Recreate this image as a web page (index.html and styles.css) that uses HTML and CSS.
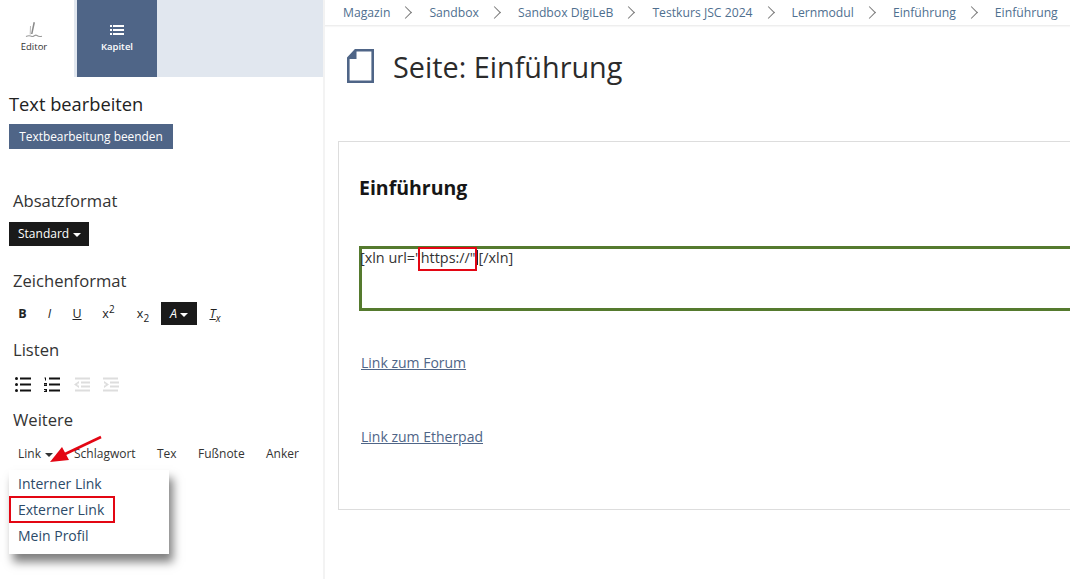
FILE: index.html
```html
<!DOCTYPE html>
<html lang="de">
<head>
<meta charset="utf-8">
<title>Seite: Einführung</title>
<link rel="stylesheet" href="styles.css">
</head>
<body>
<div class="app">
  <aside class="side">
    <div class="tabs">
      <div class="tab tab-on">
        <svg class="tab-ico" width="20" height="18" viewBox="0 0 20 18"><path d="M9.500 1 L11 1.500 L8.500 13 L7 13 Z" fill="#8a8a8a"/><path d="M6.500 5 L6.200 13.500" stroke="#bbb" stroke-width="1" fill="none"/><path d="M2 15.500 C4 14.500 6 14.500 8 15.500 C10 16 11 13 13 14.500 C14 15.300 15.500 15.800 18 15.200" stroke="#999" stroke-width="1.100" fill="none"/></svg>
        <span>Editor</span>
      </div>
      <div class="tab tab-dark">
        <svg class="tab-ico" width="20" height="18" viewBox="0 0 20 18"><path d="M3 4h2v2H3zM6 4h11v2H6zM3 8h2v2H3zM6 8h11v2H6zM3 12h2v2H3zM6 12h11v2H6z" fill="#fff"/></svg>
        <span>Kapitel</span>
      </div>
    </div>
    <div class="side-body">
      <h2 class="side-title">Text bearbeiten</h2>
      <button class="btn-end">Textbearbeitung beenden</button>
      <h3 class="group g-abs">Absatzformat</h3>
      <div class="drop-dark">Standard <i class="caret"></i></div>
      <h3 class="group g-zei">Zeichenformat</h3>
      <div class="tools">
        <span class="t t-b">B</span>
        <span class="t t-i">I</span>
        <span class="t t-u">U</span>
        <span class="t t-sup">x<sup>2</sup></span>
        <span class="t t-sub">x<sub>2</sub></span>
        <span class="t t-a"><em>A</em><i class="caret"></i></span>
        <span class="t t-x"><u>T</u><sub>x</sub></span>
      </div>
      <h3 class="group g-lis">Listen</h3>
      <div class="lists">
        <svg width="16" height="15" viewBox="0 0 16 15"><g fill="#111"><circle cx="1.500" cy="1.500" r="1.500"/><circle cx="1.500" cy="7.500" r="1.500"/><circle cx="1.500" cy="13.500" r="1.500"/><rect x="5" y="0.500" width="11" height="2"/><rect x="5" y="6.500" width="11" height="2"/><rect x="5" y="12.500" width="11" height="2"/></g></svg>
        <svg width="16" height="15" viewBox="0 0 16 15"><g fill="#111"><path d="M0.500 0.500 H2 V3.500 H1 V1.500 H0.500 Z"/><path d="M0 6 H3 V7.800 H1.200 V8 H3 V9 H0 V7.200 H1.800 V7 H0 Z"/><path d="M0 12 H3 V15 H0 V14 H1.800 V13.800 H0.800 V13.200 H1.800 V13 H0 Z"/><rect x="5" y="0.500" width="11" height="2"/><rect x="5" y="6.500" width="11" height="2"/><rect x="5" y="12.500" width="11" height="2"/></g></svg>
        <svg width="16" height="15" viewBox="0 0 16 15"><g fill="#ddd"><rect x="1" y="0.500" width="15" height="2"/><rect x="7" y="4.500" width="9" height="2"/><rect x="7" y="8.500" width="9" height="2"/><rect x="1" y="12.500" width="15" height="2"/><path d="M0 7.500 L5 4 V6.500 H3.500 V8.500 H5 V11 Z"/></g></svg>
        <svg width="16" height="15" viewBox="0 0 16 15"><g fill="#ddd"><rect x="0" y="0.500" width="15" height="2"/><rect x="7" y="4.500" width="9" height="2"/><rect x="7" y="8.500" width="9" height="2"/><rect x="0" y="12.500" width="15" height="2"/><path d="M6 7.500 L1 4 V6.500 H2.500 V8.500 H1 V11 Z"/></g></svg>
      </div>
      <h3 class="group g-wei">Weitere</h3>
      <div class="more">
        <span class="m m-link">Link <i class="caret caret-dark"></i></span>
        <span class="m m-sch">Schlagwort</span>
        <span class="m m-tex">Tex</span>
        <span class="m m-fus">Fußnote</span>
        <span class="m m-ank">Anker</span>
      </div>
      <ul class="menu">
        <li>Interner Link</li>
        <li class="marked">Externer Link</li>
        <li>Mein Profil</li>
      </ul>
      <svg class="arrow" width="56" height="30" viewBox="0 0 56 30"><path d="M53 2 L15 20" stroke="#e30613" stroke-width="2.600" fill="none"/><path d="M2 27 L14 12 L21 25 Z" fill="#e30613"/></svg>
    </div>
  </aside>
  <main class="main">
    <nav class="crumbs">
      <a>Magazin</a><b></b><a>Sandbox</a><b></b><a>Sandbox DigiLeB</a><b></b><a>Testkurs JSC 2024</a><b></b><a>Lernmodul</a><b></b><a>Einführung</a><b></b><a>Einführung</a>
    </nav>
    <header class="head">
      <svg class="page-ico" width="27" height="34" viewBox="0 0 27 34"><path d="M8.500 1.300 H25.700 V32.700 H1.300 V9 Z" fill="#fff" stroke="#4f6587" stroke-width="2.600"/><path d="M9.500 1 V10 H1 Z" fill="#4f6587"/></svg>
      <h1>Seite: Einführung</h1>
    </header>
    <section class="panel">
      <h2>Einführung</h2>
      <div class="edit"><span class="code">[xln url="<span class="box">https://"</span><span class="cur"></span>[/xln]</span></div>
      <p class="lnk l1"><a>Link zum Forum</a></p>
      <p class="lnk l2"><a>Link zum Etherpad</a></p>
    </section>
  </main>
</div>
</body>
</html>
```
FILE: styles.css
```css
*, *::before, *::after { box-sizing: border-box; }
html, body { margin: 0; height: 100%; overflow: hidden; background: #fff; }
body { font-family: "Open Sans", "Liberation Sans", sans-serif; color: #222; }
.app { display: flex; height: 579px; width: 1070px; overflow: hidden; }

.side { width: 325px; flex: none; border-right: 2px solid #f3f3f3; }
.tabs { display: flex; height: 77px; width: 323px; background: #e1e7ef; }
.tab { display: flex; flex-direction: column; align-items: center; font-size: 9.500px; padding-top: 21px; }
.tab span { line-height: 13px; margin-top: 1px; }
.tab-ico { display: block; }
.tab-on { width: 74px; padding-right: 6px; background: #fff; color: #333; }
.tab-dark { width: 80px; margin-left: 3px; background: #4f6587; color: #fff; font-weight: 600; }

.side-body { position: relative; padding-left: 9px; }
.side-title { margin: 15px 0 0; font-size: 18.300px; line-height: 24px; font-weight: 500; color: #222; }
.btn-end { display: block; margin-top: 8px; width: 164px; height: 25px; padding: 0; border: 0; background: #4f6587; color: #fff; font: 11.900px/25px "Open Sans", sans-serif; text-align: center; }
.group { margin: 0 0 0 4px; font-size: 16.600px; line-height: 24px; font-weight: 400; color: #333; }
.g-abs { margin-top: 40px; }
.g-zei { margin-top: 23px; }
.g-lis { margin-top: 13px; }
.g-wei { margin-top: 15px; }

.caret { display: inline-block; width: 0; height: 0; border-left: 4px solid transparent; border-right: 4px solid transparent; border-top: 4px solid #fff; vertical-align: middle; margin-left: 1px; }
.caret-dark { border-top-color: #333; }
.drop-dark { margin-top: 9px; width: 80px; height: 24px; background: #1a1a1a; color: #fff; font-size: 12px; line-height: 24px; padding-left: 9px; }

.tools { display: flex; align-items: center; height: 23px; margin-top: 9px; font-size: 12.500px; color: #222; }
.t { display: block; text-align: center; line-height: 23px; }
.t sup, .t sub { font-size: 10px; line-height: 0; }
.t-b { width: 27px; font-weight: 700; }
.t-i { width: 27px; font-style: italic; }
.t-u { width: 28px; text-decoration: underline; }
.t-sup { width: 35px; }
.t-sub { width: 34px; margin-right: 1px; }
.t-a { width: 36px; background: #1a1a1a; color: #fff; }
.t-a em { margin-right: 2px; }
.t-x { width: 36px; font-style: italic; }

.lists { display: flex; align-items: center; gap: 13.300px; height: 18px; margin-top: 13px; margin-left: 6px; }
.more { display: flex; align-items: center; height: 18px; margin-top: 13px; font-size: 12px; color: #333; white-space: nowrap; }
.m { display: block; line-height: 18px; }
.m-link { margin-left: 9px; width: 56px; }
.m-sch { width: 83px; }
.m-tex { width: 41px; }
.m-fus { width: 68px; }

.menu { list-style: none; width: 160px; height: 84px; margin: 7px 0 0; padding: 1px 0 0; background: #fff; box-shadow: 4px 8px 9px rgba(0,0,0,.5); font-size: 14px; color: #2c4a68; }
.menu li { height: 26px; line-height: 26px; padding-left: 9px; }
.marked { position: relative; }
.marked::after { content: ""; position: absolute; left: 0; top: -1px; width: 106px; height: 27px; border: 2px solid #e30613; }
.arrow { position: absolute; left: 48px; top: 343px; }

.main { flex: 1; min-width: 0; }
.crumbs { display: flex; align-items: center; height: 26px; padding-left: 18px; border-bottom: 1px solid #eee; font-size: 12.200px; color: #4f6f8f; white-space: nowrap; overflow: hidden; box-shadow: 0 1px 1px rgba(0,0,0,.03); }
.crumbs b { display: block; flex: none; width: 9px; height: 9px; margin: 0 19px 0 11px; border-top: 1.300px solid #777; border-right: 1.300px solid #777; transform: rotate(45deg); }
.head { display: flex; align-items: center; height: 62px; margin-top: 10px; padding-left: 22px; }
.page-ico { flex: none; margin-bottom: 2px; }
.head h1 { margin: 0 0 0 19px; font-size: 28.800px; line-height: 38px; font-weight: 500; color: #2b2b2b; }
.panel { width: 760px; height: 369px; margin: 43px 0 0 13px; border: 1.500px solid #ddd; padding: 0 0 0 20px; }
.panel h2 { margin: 32px 0 0; font-size: 19.500px; line-height: 27px; font-weight: 700; color: #161616; }
.edit { width: 760px; height: 65px; margin-top: 45px; border: 3px solid #557a2e; font-size: 14.400px; line-height: 18px; color: #333; }
.code { display: block; margin-left: -2px; position: relative; white-space: nowrap; }
.box { position: relative; }
.box::after { content: ""; position: absolute; left: -3px; top: -1px; right: -1px; height: 24px; border: 2px solid #e30613; }
.cur { display: inline-block; width: 1px; height: 15px; background: #223; vertical-align: -2px; margin: 0 1px; }
.lnk { margin: 0 0 0 2px; font-size: 14px; line-height: 20px; color: #4f6587; }
.lnk a { text-decoration: underline; }
.l1 { margin-top: 42px; }
.l2 { margin-top: 54px; }
```
